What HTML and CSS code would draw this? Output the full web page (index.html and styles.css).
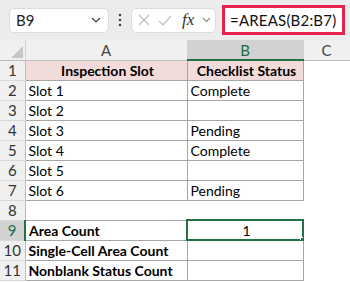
FILE: index.html
```html
<!DOCTYPE html>
<html lang="en">
  <head>
    <meta charset="UTF-8" />
    <title>AREAS</title>
    <link rel="stylesheet" href="styles.css">
  </head>
  <body>
    <header class="bar">
      <div class="namebox">
        <span>B9</span>
        <svg width="10" height="6" viewBox="0 0 10 6"><path d="M1 1 L5 5 L9 1" fill="none" stroke="#444" stroke-width="1.2"/></svg>
      </div>
      <svg class="dots" width="4" height="14" viewBox="0 0 4 14">
        <circle cx="2" cy="2" r="1.3" fill="#444"/>
        <circle cx="2" cy="7" r="1.3" fill="#444"/>
        <circle cx="2" cy="12" r="1.3" fill="#444"/>
      </svg>
      <div class="fxbox">
        <svg width="12" height="12" viewBox="0 0 12 12"><path d="M1 1 L11 11 M11 1 L1 11" stroke="#bdbdbd" stroke-width="1.2"/></svg>
        <svg width="14" height="11" viewBox="0 0 14 11"><path d="M1 6 L5 10 L13 1" fill="none" stroke="#bdbdbd" stroke-width="1.2"/></svg>
        <i class="fx">fx</i>
        <svg width="9" height="6" viewBox="0 0 9 6"><path d="M1 1 L4.5 4.5 L8 1" fill="none" stroke="#888" stroke-width="1.1"/></svg>
      </div>
      <div class="formula">=AREAS(B2:B7)</div>
    </header>

    <table class="sheet">
      <colgroup>
        <col class="c-row" />
        <col class="c-a" />
        <col class="c-b" />
        <col class="c-c" />
      </colgroup>
      <tr class="colhead">
        <th class="corner"><span class="tri"></span></th>
        <th>A</th>
        <th class="sel">B</th>
        <th>C</th>
      </tr>
      <tr>
        <th class="rh">1</th>
        <td class="box head">Inspection Slot</td>
        <td class="box head">Checklist Status</td>
        <td></td>
      </tr>
      <tr><th class="rh">2</th><td class="box">Slot 1</td><td class="box">Complete</td><td></td></tr>
      <tr><th class="rh">3</th><td class="box">Slot 2</td><td class="box"></td><td></td></tr>
      <tr><th class="rh">4</th><td class="box">Slot 3</td><td class="box">Pending</td><td></td></tr>
      <tr><th class="rh">5</th><td class="box">Slot 4</td><td class="box">Complete</td><td></td></tr>
      <tr><th class="rh">6</th><td class="box">Slot 5</td><td class="box"></td><td></td></tr>
      <tr><th class="rh">7</th><td class="box">Slot 6</td><td class="box">Pending</td><td></td></tr>
      <tr><th class="rh">8</th><td></td><td></td><td></td></tr>
      <tr>
        <th class="rh rsel">9</th>
        <td class="box bold">Area Count</td>
        <td class="box num active">1<span class="handle"></span></td>
        <td></td>
      </tr>
      <tr><th class="rh">10</th><td class="box bold">Single-Cell Area Count</td><td class="box"></td><td></td></tr>
      <tr><th class="rh">11</th><td class="box bold">Nonblank Status Count</td><td class="box"></td><td></td></tr>
    </table>
  </body>
</html>
```

FILE: styles.css
```css
body {
  margin: 0;
  width: 350px;
  height: 282px;
  overflow: hidden;
  background: #ffffff;
  font-family: Lato, "Liberation Sans", sans-serif;
}

.bar {
  height: 40px;
  background: #ececec;
  display: flex;
  align-items: center;
  padding-left: 9px;
  box-sizing: border-box;
}

.namebox {
  width: 100px;
  height: 25px;
  box-sizing: border-box;
  background: #fff;
  border: 1px solid #dcdcdc;
  border-radius: 5px;
  display: flex;
  align-items: center;
  justify-content: space-between;
  padding: 0 7px 0 6px;
  font-size: 15px;
  color: #222;
}

.dots {
  margin-left: 9px;
}

.fxbox {
  margin-left: 9px;
  width: 85px;
  height: 25px;
  box-sizing: border-box;
  background: #fff;
  border: 1px solid #dcdcdc;
  border-radius: 5px;
  display: flex;
  align-items: center;
  gap: 8px;
  padding-left: 6px;
}

.fx {
  font-family: "Liberation Serif", serif;
  font-size: 17px;
  color: #333;
  margin-left: 2px;
}

.formula {
  margin-left: 6px;
  width: 123px;
  height: 30px;
  box-sizing: border-box;
  border: 3px solid #e5234b;
  background: #fff;
  font-size: 15px;
  letter-spacing: 0.2px;
  color: #111;
  display: flex;
  align-items: center;
  padding-left: 5px;
  white-space: nowrap;
  overflow: hidden;
}

.sheet {
  border-collapse: collapse;
  table-layout: fixed;
  width: 350px;
  font-size: 14px;
  color: #000;
}

.c-row { width: 25px; }
.c-a { width: 162px; }
.c-b { width: 116px; }
.c-c { width: 47px; }

.sheet tr {
  height: 20px;
}

.sheet td {
  padding: 0 0 0 3px;
  white-space: nowrap;
  overflow: hidden;
}

.colhead th {
  background: #f0f0f0;
  font-weight: normal;
  font-size: 15px;
  color: #444;
  border-right: 1px solid #d2d2d2;
  border-bottom: 1px solid #bdbdbd;
  padding: 0;
}

.colhead th.sel {
  background: #d2d2d2;
  color: #1e6b3f;
  border-bottom: 2px solid #217346;
}

.corner {
  position: relative;
}

.tri {
  position: absolute;
  right: 2px;
  bottom: 2px;
  width: 0;
  height: 0;
  border-left: 12px solid transparent;
  border-bottom: 12px solid #c6c6c6;
}

.rh {
  background: #f0f0f0;
  font-weight: normal;
  font-size: 15px;
  color: #333;
  border-right: 1px solid #bdbdbd;
  border-bottom: 1px solid #d8d8d8;
  padding: 0;
}

.rh.rsel {
  background: #d2d2d2;
  color: #1e6b3f;
  border-right: 2px solid #217346;
}

.box {
  border: 1px solid #a6a6a6;
}

.head {
  background: #f2dcdb;
  font-weight: bold;
  text-align: center;
}

.bold {
  font-weight: bold;
}

.num {
  text-align: center;
}

.active {
  position: relative;
  outline: 2px solid #217346;
  outline-offset: -1px;
}

.handle {
  position: absolute;
  right: -4px;
  bottom: -4px;
  width: 5px;
  height: 5px;
  background: #217346;
  border: 1px solid #fff;
}
```
